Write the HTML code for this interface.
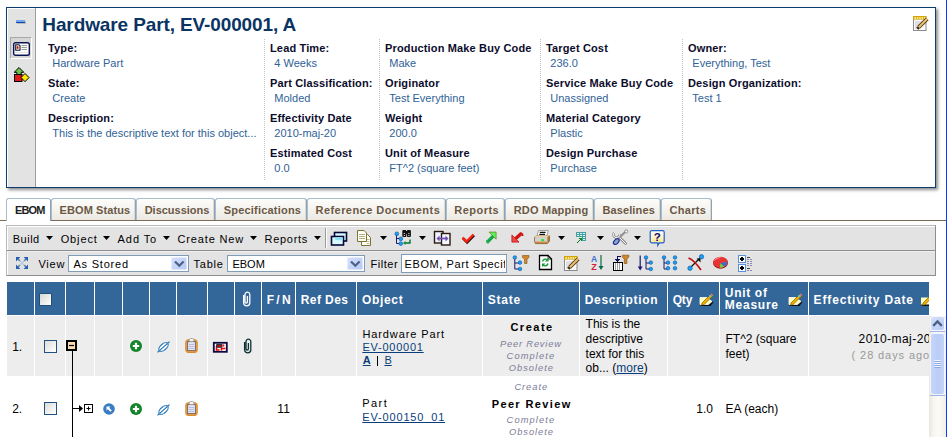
<!DOCTYPE html><html><head><meta charset="utf-8"><style>
html,body{margin:0;padding:0;background:#fff;width:947px;height:437px;overflow:hidden;position:relative;font-family:"Liberation Sans",sans-serif;}
.a{position:absolute;}
.t{position:absolute;white-space:nowrap;}
svg{overflow:visible}
</style></head><body>
<div class="a" style="left:6px;top:7px;width:928px;height:179px;border:1px solid #0d3c6e;background:#fff;box-shadow:2px 2px 3px rgba(0,0,0,.45);"></div>
<div class="a" style="left:7px;top:8px;width:28px;height:179px;background:#e3e3e3;border-right:1px solid #9c9c9c;box-shadow:inset 1px 1px 0 #fff;"></div>
<div class="a" style="left:17px;top:21px;width:9px;height:3px;background:#6d6d6d;opacity:.35;"></div>
<div class="a" style="left:16px;top:20px;width:9px;height:2px;background:#79a6e6;"></div>
<div class="a" style="left:16px;top:22px;width:9px;height:1px;background:#0b4cb4;"></div>
<div class="a" style="left:10px;top:37px;width:22px;height:22px;background:#d6d6d6;border-top:1px solid #a8a8a8;border-left:1px solid #a8a8a8;border-right:1px solid #fff;border-bottom:1px solid #fff;box-sizing:border-box;"></div>
<svg class="a" style="left:13px;top:42px" width="17" height="14" viewBox="0 0 17 14"><rect x="0.7" y="0.7" width="15.6" height="12.6" rx="1.8" fill="#fff" stroke="#0b1450" stroke-width="1.4"/><path d="M2.7 2.7h3.2l1.1 1.1v4.5H2.7z" fill="#fff6c0" stroke="#0b1450" stroke-width="1.1"/><rect x="3.8" y="4.3" width="1.6" height="2.4" fill="#b00000"/><path d="M8.5 3.5h5.5M8.5 5.5h5.5M8.5 7.5h5.5" stroke="#9a9a9a" stroke-width="1"/><path d="M2 10.5h13" stroke="#e4e4e4" stroke-width="1"/></svg>
<svg class="a" style="left:13px;top:66px" width="17" height="17" viewBox="0 0 17 17"><path d="M6 1.5l4.8 4.8h-2.6v3.5h-4.4v-3.5h-2.6z" fill="#6cc24a" stroke="#000" stroke-width="1"/><rect x="1.5" y="8.5" width="7.5" height="7" fill="#e01818" stroke="#000" stroke-width="1"/><path d="M12 7.5l4 4-4 4.2-4-4.2z" fill="#ffe600" stroke="#000" stroke-width="1"/></svg>
<svg class="a" style="left:912px;top:15px" width="17" height="17" viewBox="0 0 17 17"><rect x="1.5" y="2" width="12.5" height="13.5" fill="#fbfbfb" stroke="#8a8a8a" stroke-width="1"/><rect x="1" y="1" width="13.5" height="3.6" fill="#d4a400"/><circle cx="3.2" cy="3" r=".9" fill="#fff3b0"/><circle cx="5.6" cy="3" r=".9" fill="#fff3b0"/><circle cx="8" cy="3" r=".9" fill="#fff3b0"/><circle cx="10.4" cy="3" r=".9" fill="#fff3b0"/><circle cx="12.8" cy="3" r=".9" fill="#fff3b0"/><path d="M3 7h8M3 9h7M3 11h5M3 13h4" stroke="#c4c4cc" stroke-width="1"/><path d="M6.8 12.2L15.2 3.8" stroke="#5a3a08" stroke-width="3.8"/><path d="M6.8 12.2L15.2 3.8" stroke="#e6c27a" stroke-width="2"/><path d="M5.3 13.7l1.5-1.5" stroke="#3a2a10" stroke-width="3"/></svg>
<div class="t " style="left:42.3px;top:15.32px;font-size:19px;line-height:19px;font-weight:bold;color:#0b3463;letter-spacing:-0.115px;" >Hardware Part, EV-000001, A</div>
<div class="t " style="left:48px;top:42.69px;font-size:11px;line-height:11px;font-weight:bold;color:#0c0c2c;letter-spacing:0.15px;" >Type:</div>
<div class="t " style="left:52.3px;top:57.69px;font-size:11px;line-height:11px;color:#2f6296;" >Hardware Part</div>
<div class="t " style="left:48px;top:77.69px;font-size:11px;line-height:11px;font-weight:bold;color:#0c0c2c;letter-spacing:0.15px;" >State:</div>
<div class="t " style="left:52.3px;top:92.69px;font-size:11px;line-height:11px;color:#2f6296;" >Create</div>
<div class="t " style="left:48px;top:112.69px;font-size:11px;line-height:11px;font-weight:bold;color:#0c0c2c;letter-spacing:0.15px;" >Description:</div>
<div class="t " style="left:52.3px;top:127.69px;font-size:11px;line-height:11px;color:#2f6296;" >This is the descriptive text for this object...</div>
<div class="t " style="left:270px;top:42.69px;font-size:11px;line-height:11px;font-weight:bold;color:#0c0c2c;letter-spacing:0.15px;" >Lead Time:</div>
<div class="t " style="left:274.3px;top:57.69px;font-size:11px;line-height:11px;color:#2f6296;" >4 Weeks</div>
<div class="t " style="left:270px;top:77.69px;font-size:11px;line-height:11px;font-weight:bold;color:#0c0c2c;letter-spacing:0.15px;" >Part Classification:</div>
<div class="t " style="left:274.3px;top:92.69px;font-size:11px;line-height:11px;color:#2f6296;" >Molded</div>
<div class="t " style="left:270px;top:112.69px;font-size:11px;line-height:11px;font-weight:bold;color:#0c0c2c;letter-spacing:0.15px;" >Effectivity Date</div>
<div class="t " style="left:274.3px;top:127.69px;font-size:11px;line-height:11px;color:#2f6296;" >2010-maj-20</div>
<div class="t " style="left:270px;top:147.69px;font-size:11px;line-height:11px;font-weight:bold;color:#0c0c2c;letter-spacing:0.15px;" >Estimated Cost</div>
<div class="t " style="left:274.3px;top:162.69px;font-size:11px;line-height:11px;color:#2f6296;" >0.0</div>
<div class="t " style="left:385px;top:42.69px;font-size:11px;line-height:11px;font-weight:bold;color:#0c0c2c;letter-spacing:0.15px;" >Production Make Buy Code</div>
<div class="t " style="left:389.3px;top:57.69px;font-size:11px;line-height:11px;color:#2f6296;" >Make</div>
<div class="t " style="left:385px;top:77.69px;font-size:11px;line-height:11px;font-weight:bold;color:#0c0c2c;letter-spacing:0.15px;" >Originator</div>
<div class="t " style="left:389.3px;top:92.69px;font-size:11px;line-height:11px;color:#2f6296;" >Test Everything</div>
<div class="t " style="left:385px;top:112.69px;font-size:11px;line-height:11px;font-weight:bold;color:#0c0c2c;letter-spacing:0.15px;" >Weight</div>
<div class="t " style="left:389.3px;top:127.69px;font-size:11px;line-height:11px;color:#2f6296;" >200.0</div>
<div class="t " style="left:385px;top:147.69px;font-size:11px;line-height:11px;font-weight:bold;color:#0c0c2c;letter-spacing:0.15px;" >Unit of Measure</div>
<div class="t " style="left:389.3px;top:162.69px;font-size:11px;line-height:11px;color:#2f6296;" >FT^2 (square feet)</div>
<div class="t " style="left:546px;top:42.69px;font-size:11px;line-height:11px;font-weight:bold;color:#0c0c2c;letter-spacing:0.15px;" >Target Cost</div>
<div class="t " style="left:550.3px;top:57.69px;font-size:11px;line-height:11px;color:#2f6296;" >236.0</div>
<div class="t " style="left:546px;top:77.69px;font-size:11px;line-height:11px;font-weight:bold;color:#0c0c2c;letter-spacing:0.15px;" >Service Make Buy Code</div>
<div class="t " style="left:550.3px;top:92.69px;font-size:11px;line-height:11px;color:#2f6296;" >Unassigned</div>
<div class="t " style="left:546px;top:112.69px;font-size:11px;line-height:11px;font-weight:bold;color:#0c0c2c;letter-spacing:0.15px;" >Material Category</div>
<div class="t " style="left:550.3px;top:127.69px;font-size:11px;line-height:11px;color:#2f6296;" >Plastic</div>
<div class="t " style="left:546px;top:147.69px;font-size:11px;line-height:11px;font-weight:bold;color:#0c0c2c;letter-spacing:0.15px;" >Design Purchase</div>
<div class="t " style="left:550.3px;top:162.69px;font-size:11px;line-height:11px;color:#2f6296;" >Purchase</div>
<div class="t " style="left:688px;top:42.69px;font-size:11px;line-height:11px;font-weight:bold;color:#0c0c2c;letter-spacing:0.15px;" >Owner:</div>
<div class="t " style="left:692.3px;top:57.69px;font-size:11px;line-height:11px;color:#2f6296;" >Everything, Test</div>
<div class="t " style="left:688px;top:77.69px;font-size:11px;line-height:11px;font-weight:bold;color:#0c0c2c;letter-spacing:0.15px;" >Design Organization:</div>
<div class="t " style="left:692.3px;top:92.69px;font-size:11px;line-height:11px;color:#2f6296;" >Test 1</div>
<div class="a" style="left:264px;top:39px;width:1px;height:141px;background:repeating-linear-gradient(to bottom,#c4c4c4 0 1px,transparent 1px 2px);"></div>
<div class="a" style="left:379px;top:39px;width:1px;height:141px;background:repeating-linear-gradient(to bottom,#c4c4c4 0 1px,transparent 1px 2px);"></div>
<div class="a" style="left:540px;top:39px;width:1px;height:141px;background:repeating-linear-gradient(to bottom,#c4c4c4 0 1px,transparent 1px 2px);"></div>
<div class="a" style="left:682px;top:39px;width:1px;height:141px;background:repeating-linear-gradient(to bottom,#c4c4c4 0 1px,transparent 1px 2px);"></div>
<div class="a" style="left:0px;top:220px;width:946px;height:1px;background:#7d6b58;"></div>
<div class="a" style="left:6px;top:198px;width:45px;height:23px;background:#fff;border:1px solid #a9bdcd;border-bottom:none;border-right-color:#8aa3b8;border-radius:3px 3px 0 0;box-sizing:border-box;"></div>
<div class="t " style="left:14.9px;top:205.19px;font-size:11px;line-height:11px;font-weight:bold;color:#1e1e1e;letter-spacing:-0.833px;" >EBOM</div>
<div class="a" style="left:51px;top:198px;width:85px;height:22px;background:linear-gradient(#fdfdfb,#ece9e2);border:1px solid #a9bdcd;border-bottom:none;border-right-color:#8aa3b8;border-radius:3px 3px 0 0;box-sizing:border-box;box-shadow:inset -1px 0 0 #dedad0;"></div>
<div class="t " style="left:59.6px;top:205.19px;font-size:11px;line-height:11px;font-weight:bold;color:#6a5845;letter-spacing:0.08px;" >EBOM Status</div>
<div class="a" style="left:136px;top:198px;width:79px;height:22px;background:linear-gradient(#fdfdfb,#ece9e2);border:1px solid #a9bdcd;border-bottom:none;border-right-color:#8aa3b8;border-radius:3px 3px 0 0;box-sizing:border-box;box-shadow:inset -1px 0 0 #dedad0;"></div>
<div class="t " style="left:144.7px;top:205.19px;font-size:11px;line-height:11px;font-weight:bold;color:#6a5845;letter-spacing:-0.02px;" >Discussions</div>
<div class="a" style="left:215px;top:198px;width:92px;height:22px;background:linear-gradient(#fdfdfb,#ece9e2);border:1px solid #a9bdcd;border-bottom:none;border-right-color:#8aa3b8;border-radius:3px 3px 0 0;box-sizing:border-box;box-shadow:inset -1px 0 0 #dedad0;"></div>
<div class="t " style="left:223.7px;top:205.19px;font-size:11px;line-height:11px;font-weight:bold;color:#6a5845;letter-spacing:0.208px;" >Specifications</div>
<div class="a" style="left:307px;top:198px;width:139px;height:22px;background:linear-gradient(#fdfdfb,#ece9e2);border:1px solid #a9bdcd;border-bottom:none;border-right-color:#8aa3b8;border-radius:3px 3px 0 0;box-sizing:border-box;box-shadow:inset -1px 0 0 #dedad0;"></div>
<div class="t " style="left:315.5px;top:205.19px;font-size:11px;line-height:11px;font-weight:bold;color:#6a5845;letter-spacing:0.45px;" >Reference Documents</div>
<div class="a" style="left:446px;top:198px;width:59px;height:22px;background:linear-gradient(#fdfdfb,#ece9e2);border:1px solid #a9bdcd;border-bottom:none;border-right-color:#8aa3b8;border-radius:3px 3px 0 0;box-sizing:border-box;box-shadow:inset -1px 0 0 #dedad0;"></div>
<div class="t " style="left:454.3px;top:205.19px;font-size:11px;line-height:11px;font-weight:bold;color:#6a5845;letter-spacing:0.467px;" >Reports</div>
<div class="a" style="left:505px;top:198px;width:89px;height:22px;background:linear-gradient(#fdfdfb,#ece9e2);border:1px solid #a9bdcd;border-bottom:none;border-right-color:#8aa3b8;border-radius:3px 3px 0 0;box-sizing:border-box;box-shadow:inset -1px 0 0 #dedad0;"></div>
<div class="t " style="left:513.7px;top:205.19px;font-size:11px;line-height:11px;font-weight:bold;color:#6a5845;letter-spacing:0.18px;" >RDO Mapping</div>
<div class="a" style="left:594px;top:198px;width:67px;height:22px;background:linear-gradient(#fdfdfb,#ece9e2);border:1px solid #a9bdcd;border-bottom:none;border-right-color:#8aa3b8;border-radius:3px 3px 0 0;box-sizing:border-box;box-shadow:inset -1px 0 0 #dedad0;"></div>
<div class="t " style="left:602.4px;top:205.19px;font-size:11px;line-height:11px;font-weight:bold;color:#6a5845;letter-spacing:0.125px;" >Baselines</div>
<div class="a" style="left:661px;top:198px;width:51px;height:22px;background:linear-gradient(#fdfdfb,#ece9e2);border:1px solid #a9bdcd;border-bottom:none;border-right-color:#8aa3b8;border-radius:3px 3px 0 0;box-sizing:border-box;box-shadow:inset -1px 0 0 #dedad0;"></div>
<div class="t " style="left:669.4px;top:205.19px;font-size:11px;line-height:11px;font-weight:bold;color:#6a5845;letter-spacing:0.32px;" >Charts</div>
<div class="a" style="left:6px;top:225px;width:930px;height:51px;background:#e3e3e3;border:1px solid #b8b8b8;border-right-color:#8e8e8e;border-bottom-color:#8e8e8e;box-sizing:border-box;box-shadow:inset 1px 1px 0 #fff;"></div>
<div class="a" style="left:7px;top:250px;width:928px;height:1px;background:#8e8e8e;"></div>
<div class="a" style="left:7px;top:251px;width:928px;height:1px;background:#f0f0f0;"></div>
<div class="t " style="left:12.75px;top:233.69px;font-size:11px;line-height:11px;color:#000;letter-spacing:0.5px;" >Build</div>
<div class="t " style="left:60.7px;top:233.69px;font-size:11px;line-height:11px;color:#000;letter-spacing:0.88px;" >Object</div>
<div class="t " style="left:117.6px;top:233.69px;font-size:11px;line-height:11px;color:#000;letter-spacing:0.92px;" >Add To</div>
<div class="t " style="left:177.5px;top:233.69px;font-size:11px;line-height:11px;color:#000;letter-spacing:0.856px;" >Create New</div>
<div class="t " style="left:264.6px;top:233.69px;font-size:11px;line-height:11px;color:#000;letter-spacing:0.7px;" >Reports</div>
<svg class="a" style="left:46px;top:236px" width="8" height="5" viewBox="0 0 8 5"><path d="M0 0h7l-3.5 4z" fill="#000"/></svg>
<svg class="a" style="left:103px;top:236px" width="8" height="5" viewBox="0 0 8 5"><path d="M0 0h7l-3.5 4z" fill="#000"/></svg>
<svg class="a" style="left:163px;top:236px" width="8" height="5" viewBox="0 0 8 5"><path d="M0 0h7l-3.5 4z" fill="#000"/></svg>
<svg class="a" style="left:250px;top:236px" width="8" height="5" viewBox="0 0 8 5"><path d="M0 0h7l-3.5 4z" fill="#000"/></svg>
<svg class="a" style="left:314px;top:236px" width="8" height="5" viewBox="0 0 8 5"><path d="M0 0h7l-3.5 4z" fill="#000"/></svg>
<div class="a" style="left:325px;top:228px;width:1px;height:20px;background:#9a9a9a;"></div>
<div class="a" style="left:326px;top:228px;width:1px;height:20px;background:#fff;"></div>
<svg class="a" style="left:380px;top:236px" width="8" height="5" viewBox="0 0 8 5"><path d="M0 0h7l-3.5 4z" fill="#000"/></svg>
<svg class="a" style="left:419px;top:236px" width="8" height="5" viewBox="0 0 8 5"><path d="M0 0h7l-3.5 4z" fill="#000"/></svg>
<svg class="a" style="left:558px;top:236px" width="8" height="5" viewBox="0 0 8 5"><path d="M0 0h7l-3.5 4z" fill="#000"/></svg>
<svg class="a" style="left:597px;top:236px" width="8" height="5" viewBox="0 0 8 5"><path d="M0 0h7l-3.5 4z" fill="#000"/></svg>
<svg class="a" style="left:634px;top:236px" width="8" height="5" viewBox="0 0 8 5"><path d="M0 0h7l-3.5 4z" fill="#000"/></svg>
<div class="t " style="left:38.4px;top:259.19px;font-size:11px;line-height:11px;color:#000;letter-spacing:0.767px;" >View</div>
<div class="t " style="left:193.4px;top:259.19px;font-size:11px;line-height:11px;color:#000;letter-spacing:0.825px;" >Table</div>
<div class="t " style="left:370.6px;top:259.19px;font-size:11px;line-height:11px;color:#000;letter-spacing:0.52px;" >Filter</div>
<div class="a" style="left:68px;top:255px;width:121px;height:17px;background:#fff;border:1px solid #7f9db9;box-sizing:border-box;"></div>
<div class="a" style="left:171px;top:257px;width:16px;height:13px;background:linear-gradient(135deg,#d6e2fc,#b4c8f4);border-radius:2px;box-shadow:inset 0 0 0 1px rgba(255,255,255,.5);"></div>
<svg class="a" style="left:174px;top:260px" width="11" height="8" viewBox="0 0 11 8"><path d="M1 1.5l4.3 4.3 4.3-4.3" fill="none" stroke="#4d6185" stroke-width="2.2"/></svg>
<div class="t " style="left:73.5px;top:259.29px;font-size:11px;line-height:11px;color:#000;letter-spacing:0.775px;" >As Stored</div>
<div class="a" style="left:227px;top:255px;width:138px;height:17px;background:#fff;border:1px solid #7f9db9;box-sizing:border-box;"></div>
<div class="a" style="left:347px;top:257px;width:16px;height:13px;background:linear-gradient(135deg,#d6e2fc,#b4c8f4);border-radius:2px;box-shadow:inset 0 0 0 1px rgba(255,255,255,.5);"></div>
<svg class="a" style="left:350px;top:260px" width="11" height="8" viewBox="0 0 11 8"><path d="M1 1.5l4.3 4.3 4.3-4.3" fill="none" stroke="#4d6185" stroke-width="2.2"/></svg>
<div class="t " style="left:232.5px;top:259.29px;font-size:11px;line-height:11px;color:#000;letter-spacing:-0.033px;" >EBOM</div>
<div class="a" style="left:401px;top:254px;width:106px;height:19px;background:#fff;border:1px solid #7f9db9;box-sizing:border-box;overflow:hidden;"></div>
<div class="a" style="left:402px;top:255px;width:103px;height:17px;overflow:hidden">
<div class="t" style="left:2.60px;top:4.19px;font-size:11px;line-height:11px;letter-spacing:0.587px">EBOM, Part Specification</div></div>
<svg class="a" style="left:330px;top:231px" width="18" height="15" viewBox="0 0 18 15"><rect x="4.5" y="1.5" width="12" height="8.5" fill="#d8fbff" stroke="#07073a" stroke-width="1.6"/><rect x="1.5" y="5.5" width="12" height="8.5" fill="#d8fbff" stroke="#07073a" stroke-width="1.6"/><rect x="5.3" y="6.3" width="7.4" height="2.9" fill="#8ee4f6"/></svg>
<svg class="a" style="left:356px;top:229px" width="16" height="17" viewBox="0 0 16 17"><path d="M5.5 5.5H11.5L14.5 8.5V16.5H5.5Z" fill="#fffff4" stroke="#7a7236" stroke-width="1"/><path d="M10.5 10.5h3M10.5 12.5h3M10.5 14.5h3" stroke="#c4be94" stroke-width="1"/><path d="M1.5 1.5H8L10.5 4V12.5H1.5Z" fill="#fffff4" stroke="#7a7236" stroke-width="1"/><path d="M3 5.5h6M3 7.5h6M3 9.5h6" stroke="#b4ae80" stroke-width="1"/></svg>
<svg class="a" style="left:394px;top:229px" width="19" height="17" viewBox="0 0 19 17"><path d="M2.5 5v9.5h4M2.5 9.5h4" fill="none" stroke="#1a1a70" stroke-width="1"/><circle cx="2.8" cy="4.8" r="1.9" fill="#1ea0f0" stroke="#0a50a0" stroke-width=".6"/><circle cx="6.8" cy="9.8" r="1.9" fill="#1ea0f0" stroke="#0a50a0" stroke-width=".6"/><circle cx="6.8" cy="14.6" r="1.9" fill="#1ea0f0" stroke="#0a50a0" stroke-width=".6"/><rect x="8.3" y="1" width="4" height="7" rx="1" fill="#111"/><rect x="12.9" y="1" width="4" height="7" rx="1" fill="#111"/><rect x="11.5" y="2" width="2.2" height="3" fill="#111"/><path d="M9.8 4.5h1M14.4 4.5h1M9.8 6.5h1M14.4 6.5h1" stroke="#fff" stroke-width="1"/><path d="M16 10.5v3.5h-5" fill="none" stroke="#0a7030" stroke-width="1.4"/><path d="M11.5 12l-2.5 2 2.5 2z" fill="#0a9030"/></svg>
<svg class="a" style="left:433px;top:230px" width="18" height="16" viewBox="0 0 18 16"><rect x="1.5" y="1.5" width="8.5" height="11.5" fill="#eef4ff" stroke="#2a1a10" stroke-width="1.4"/><rect x="8.5" y="3.5" width="8.5" height="11.5" fill="#f6f9ff" stroke="#2a1a10" stroke-width="1.4"/><path d="M5 8.5h9" stroke="#7050b0" stroke-width="1.8"/><path d="M3.5 8.5l3-3v6zM15.5 8.5l-3-3v6z" fill="#7050b0"/></svg>
<svg class="a" style="left:461px;top:233px" width="14" height="11" viewBox="0 0 14 11"><path d="M1.5 4.5l4 4 7-7" fill="none" stroke="#301010" stroke-width="2.6" transform="translate(.6,.8)"/><path d="M1.5 4.5l4 4 7-7" fill="none" stroke="#ff2010" stroke-width="2.4"/></svg>
<svg class="a" style="left:485px;top:231px" width="13" height="13" viewBox="0 0 13 13"><path d="M2.8 10.6L8.5 4.9" stroke="#12a844" stroke-width="3.4"/><path d="M1.8 9.5c-.3 1.5.5 2.3 2 2.3" fill="none" stroke="#12a844" stroke-width="1.6"/><path d="M4 1.1H11.1V8.2z" fill="#5cf45c" stroke="#6a8a20" stroke-width=".8"/></svg>
<svg class="a" style="left:510px;top:232px" width="14" height="12" viewBox="0 0 14 12"><path d="M5.5 6.8L11 1.8" stroke="#d01414" stroke-width="3.4"/><path d="M10 1.2c1.8-.3 2.8.8 2.6 2.8" fill="none" stroke="#d01414" stroke-width="1.8"/><path d="M1.9 3V10.1H9z" fill="#f04848" stroke="#c01010" stroke-width=".8"/></svg>
<svg class="a" style="left:533px;top:229px" width="18" height="16" viewBox="0 0 18 16"><path d="M4 7L5.5 1.5H15.2L13.8 7z" fill="#fff" stroke="#8a8a8a" stroke-width=".8"/><path d="M6.8 3.4H12.6M6.3 5.4H12" stroke="#111" stroke-width="1.1"/><path d="M1.5 8.3L3.5 6.8H16.5L14.3 8.3z" fill="#fff6c8" stroke="#b08050" stroke-width=".6"/><rect x="1.5" y="8.3" width="12.8" height="4.2" fill="#d4d4d4"/><path d="M1.5 12.5H14.3V14.6H2.5z" fill="#c88a48"/><path d="M14.3 8.3L16.5 6.8V12L14.3 14.6z" fill="#b47a3a"/><path d="M1.5 8.3V12.5L2.5 14.6H14.3L16.5 12V6.8" fill="none" stroke="#8a5a20" stroke-width=".8"/><rect x="8.2" y="10.2" width="3" height="1.7" fill="#10e818"/></svg>
<svg class="a" style="left:575px;top:231px" width="13" height="14" viewBox="0 0 13 14"><g shape-rendering="crispEdges"><path d="M1 1h10v9H1z" fill="#4e9c9c"/><path d="M4 1h1v9H4zM7 1h1v9H7z" fill="#22aab0"/><path d="M2 2h2v1H2zM5 2h2v1H5zM8 2h2v1H8zM2 4h2v1H2zM5 4h2v1H5zM8 4h2v1H8zM8 6h2v1H8zM8 8h2v1H8z" fill="#e8f0f0"/><path d="M1 6h6v7H1z" fill="#e3e3e3"/><path d="M3 7h4v4z" fill="#108a20"/><path d="M1.5 12.5l3-3" stroke="#0a6a1a" stroke-width="1.3"/></g></svg>
<svg class="a" style="left:611px;top:229px" width="18" height="17" viewBox="0 0 18 17"><path d="M8.3 8.3L14.6 14.6" stroke="#8c8c8c" stroke-width="2.8" stroke-linecap="round"/><path d="M8.3 8.3L14.6 14.6" stroke="#fff" stroke-width="1" stroke-linecap="round"/><path d="M3.2 3.8a3 3 0 1 0 5.2 1.3" fill="none" stroke="#8c8c8c" stroke-width="2.6"/><path d="M3.2 3.8a3 3 0 1 0 5.2 1.3" fill="none" stroke="#fff" stroke-width="1"/><path d="M9.5 7.6L15.2 1.9" stroke="#8c8c8c" stroke-width="2"/><circle cx="15.3" cy="2.4" r="1.5" fill="#fff" stroke="#8c8c8c" stroke-width="1"/><ellipse cx="5.3" cy="12.6" rx="3.4" ry="2.1" transform="rotate(-45 5.3 12.6)" fill="#8aa6c8" stroke="#1a2c9a" stroke-width="1.1"/></svg>
<svg class="a" style="left:649px;top:229px" width="17" height="18" viewBox="0 0 17 18"><defs><linearGradient id="hg" x1="0" y1="0" x2="0" y2="1"><stop offset="0" stop-color="#ffffff"/><stop offset="1" stop-color="#ffe27a"/></linearGradient></defs><path d="M2.8 1.6h10.8a1.6 1.6 0 0 1 1.6 1.6v9a1.6 1.6 0 0 1-1.6 1.6h-3.2l-1.6 2.6v-2.6h-6a1.6 1.6 0 0 1-1.6-1.6v-9a1.6 1.6 0 0 1 1.6-1.6z" fill="url(#hg)" stroke="#2060c8" stroke-width="1.2"/><text x="8.2" y="11.8" font-family="Liberation Sans" font-weight="bold" font-size="11.5" text-anchor="middle" fill="#0a0a6a">?</text></svg>
<svg class="a" style="left:15px;top:256px" width="14" height="14" viewBox="0 0 14 14"><path d="M3 3l8 8M11 3l-8 8" stroke="#b4cce6" stroke-width="1.5"/><path d="M3.2 3.2l1.6 1.6M10.8 3.2l-1.6 1.6M3.2 10.8l1.6-1.6M10.8 10.8l-1.6-1.6" stroke="#6a7a8a" stroke-width="1.5"/><path d="M1 1h4.4L1 5.4zM13 1v4.4L8.6 1zM1 13V8.6L5.4 13zM13 13H8.6L13 8.6z" fill="#1f5fb8"/></svg>
<svg class="a" style="left:512px;top:254px" width="18" height="17" viewBox="0 0 18 17"><path d="M2.8 4v11h5M2.8 9h5" fill="none" stroke="#1a1a70" stroke-width="1"/><circle cx="2.8" cy="3.5" r="1.8" fill="#1ea0f0" stroke="#0a50a0" stroke-width=".6"/><circle cx="8" cy="8.6" r="1.8" fill="#1ea0f0" stroke="#0a50a0" stroke-width=".6"/><circle cx="8" cy="15" r="1.8" fill="#1ea0f0" stroke="#0a50a0" stroke-width=".6"/><path d="M10.5 1.5h6.5v2l-2 1.5v4.5h-2.5v-4.5l-2-1.5z" fill="#d08830" stroke="#8a5010" stroke-width=".6"/></svg>
<svg class="a" style="left:538px;top:254px" width="15" height="17" viewBox="0 0 15 17"><path d="M1.5 1.5h8.5l3.5 3.5v10.5h-12z" fill="#fff" stroke="#000" stroke-width="1.3"/><path d="M10 1.5v3.5h3.5" fill="none" stroke="#000" stroke-width=".8"/><path d="M4.5 7.5a3 3 0 0 1 5-1.5M10 9.5a3 3 0 0 1-5 1.5" fill="none" stroke="#10a030" stroke-width="1.4"/><path d="M10.5 4v3.5h-3.5zM4 13v-3.5h3.5z" fill="#10a030"/></svg>
<svg class="a" style="left:563px;top:255px" width="17" height="17" viewBox="0 0 17 17"><rect x="1.5" y="2" width="12.5" height="13.5" fill="#fbfbfb" stroke="#8a8a8a" stroke-width="1"/><rect x="1" y="1" width="13.5" height="3.6" fill="#d4a400"/><circle cx="3.2" cy="3" r=".9" fill="#fff3b0"/><circle cx="5.6" cy="3" r=".9" fill="#fff3b0"/><circle cx="8" cy="3" r=".9" fill="#fff3b0"/><circle cx="10.4" cy="3" r=".9" fill="#fff3b0"/><circle cx="12.8" cy="3" r=".9" fill="#fff3b0"/><path d="M3 7h8M3 9h7M3 11h5M3 13h4" stroke="#c4c4cc" stroke-width="1"/><path d="M6.8 12.2L15.2 3.8" stroke="#5a3a08" stroke-width="3.8"/><path d="M6.8 12.2L15.2 3.8" stroke="#e6c27a" stroke-width="2"/><path d="M5.3 13.7l1.5-1.5" stroke="#3a2a10" stroke-width="3"/></svg>
<svg class="a" style="left:590px;top:254px" width="15" height="17" viewBox="0 0 15 17"><text x="4" y="7.5" font-family="Liberation Sans" font-weight="bold" font-size="8.5" text-anchor="middle" fill="#3a70d0">A</text><text x="4" y="16" font-family="Liberation Sans" font-weight="bold" font-size="9" text-anchor="middle" fill="#d02040">Z</text><path d="M11 1v12" stroke="#0a6a4a" stroke-width="1.2"/><path d="M8.5 12h5l-2.5 4z" fill="#0a6a4a"/></svg>
<svg class="a" style="left:612px;top:254px" width="18" height="17" viewBox="0 0 18 17"><g shape-rendering="crispEdges"><path d="M1 8h10v9H1z" fill="#000"/><path d="M2 9h8v7H2z" fill="#fff"/><path d="M3 9h1v7H3zM5 9h1v7H5zM7 9h1v7H7z" fill="#a0a0a0"/><path d="M5 2h4v1H6v3H5z" fill="#10105a"/><path d="M3 5h5v1H3zM4 6h3v1H4zM5 7h1v1H5z" fill="#10105a"/></g><path d="M10.3 1.2h6.6v1.8l-2 2v4.5h-2.6V5l-2-2z" fill="#d08828" stroke="#7a4a10" stroke-width=".6"/></svg>
<svg class="a" style="left:637px;top:254px" width="17" height="17" viewBox="0 0 17 17"><path d="M3.2 1.5v13" stroke="#1a1a70" stroke-width="1.2"/><path d="M0.8 12.5h4.8l-2.4 4z" fill="#1a1a70"/><path d="M9 4v11h5M9 9h5" fill="none" stroke="#1a1a70" stroke-width="1"/><circle cx="9" cy="3.5" r="1.8" fill="#1ea0f0" stroke="#0a50a0" stroke-width=".6"/><circle cx="13.8" cy="8.6" r="1.8" fill="#1ea0f0" stroke="#0a50a0" stroke-width=".6"/><circle cx="13.8" cy="15" r="1.8" fill="#1ea0f0" stroke="#0a50a0" stroke-width=".6"/></svg>
<svg class="a" style="left:661px;top:254px" width="17" height="17" viewBox="0 0 17 17"><path d="M3 4v11h4M3 9h4" fill="none" stroke="#1a1a70" stroke-width="1"/><circle cx="3" cy="3.5" r="1.8" fill="#1ea0f0" stroke="#0a50a0" stroke-width=".6"/><circle cx="7" cy="8.6" r="1.8" fill="#1ea0f0" stroke="#0a50a0" stroke-width=".6"/><circle cx="7" cy="14.2" r="1.8" fill="#1ea0f0" stroke="#0a50a0" stroke-width=".6"/><circle cx="14" cy="3.5" r="1.8" fill="#1ea0f0" stroke="#0a50a0" stroke-width=".6"/><circle cx="14" cy="8.6" r="1.8" fill="#1ea0f0" stroke="#0a50a0" stroke-width=".6"/><circle cx="14" cy="14.2" r="1.8" fill="#1ea0f0" stroke="#0a50a0" stroke-width=".6"/></svg>
<svg class="a" style="left:686px;top:254px" width="19" height="17" viewBox="0 0 19 17"><path d="M4 14l10-10" stroke="#111" stroke-width="1.2"/><path d="M10.5 4.5h4v4z" fill="#111"/><circle cx="4" cy="14.2" r="2.2" fill="#1ea0f0" stroke="#0a50a0" stroke-width=".6"/><circle cx="15.5" cy="2.8" r="2.2" fill="#1ea0f0" stroke="#0a50a0" stroke-width=".6"/><path d="M2.5 4c4 1.5 8 5.5 12.5 12" fill="none" stroke="#c01010" stroke-width="1.6"/></svg>
<svg class="a" style="left:712px;top:255px" width="17" height="15" viewBox="0 0 17 15"><ellipse cx="8.5" cy="8" rx="7.5" ry="5.8" fill="#a01818"/><ellipse cx="8.5" cy="7.2" rx="7.3" ry="5.5" fill="#e83434"/><path d="M8.3 8.2l6.8-1.8c.3 2-.8 4-2.8 5z" fill="#3a70c8"/><path d="M8.3 8.2l4 3.2c-1.2.9-2.8 1.3-4.5 1.3z" fill="#70d040"/><path d="M2.5 5.5c1.2-1.8 3.5-2.8 6-2.8" stroke="#ff9a9a" stroke-width="1" fill="none"/></svg>
<svg class="a" style="left:737px;top:254px" width="18" height="18" viewBox="0 0 18 18"><g shape-rendering="crispEdges"><rect x="1.5" y="1.5" width="7" height="7" fill="#fff" stroke="#5a90d8" stroke-width="1.2"/><rect x="1.5" y="10.5" width="7" height="7" fill="#fff" stroke="#5a90d8" stroke-width="1.2"/><path d="M3 4h4v2H3zM4 3h2v4H4zM3 13h4v2H3zM4 12h2v4H4z" fill="#000"/><path d="M10 3h3v1h-3zM10 14h3v1h-3z" fill="#404040"/><path d="M10 5h2v1h-2zM13 5h2v1h-2zM10 7h2v1h-2zM13 7h2v1h-2zM10 9h2v1h-2zM13 9h2v1h-2zM10 11h2v1h-2zM13 11h2v1h-2zM10 16h2v1h-2zM13 16h2v1h-2z" fill="#8c8cb4"/></g></svg>
<div class="a" style="left:7px;top:282px;width:922px;height:33px;background:#336699;"></div>
<div class="a" style="left:34px;top:282px;width:1px;height:33px;background:#fff;"></div>
<div class="a" style="left:65px;top:282px;width:1px;height:33px;background:#fff;"></div>
<div class="a" style="left:94px;top:282px;width:1px;height:33px;background:#fff;"></div>
<div class="a" style="left:122px;top:282px;width:1px;height:33px;background:#fff;"></div>
<div class="a" style="left:149px;top:282px;width:1px;height:33px;background:#fff;"></div>
<div class="a" style="left:176px;top:282px;width:1px;height:33px;background:#fff;"></div>
<div class="a" style="left:207px;top:282px;width:1px;height:33px;background:#fff;"></div>
<div class="a" style="left:234px;top:282px;width:1px;height:33px;background:#fff;"></div>
<div class="a" style="left:261px;top:282px;width:1px;height:33px;background:#fff;"></div>
<div class="a" style="left:295px;top:282px;width:1px;height:33px;background:#fff;"></div>
<div class="a" style="left:356px;top:282px;width:1px;height:33px;background:#fff;"></div>
<div class="a" style="left:482px;top:282px;width:1px;height:33px;background:#fff;"></div>
<div class="a" style="left:579px;top:282px;width:1px;height:33px;background:#fff;"></div>
<div class="a" style="left:667px;top:282px;width:1px;height:33px;background:#fff;"></div>
<div class="a" style="left:719px;top:282px;width:1px;height:33px;background:#fff;"></div>
<div class="a" style="left:808px;top:282px;width:1px;height:33px;background:#fff;"></div>
<div class="t " style="left:266.7px;top:294.24px;font-size:12px;line-height:12px;font-weight:bold;color:#fff;letter-spacing:2.35px;" >F/N</div>
<div class="t " style="left:300.7px;top:294.24px;font-size:12px;line-height:12px;font-weight:bold;color:#fff;letter-spacing:0.433px;" >Ref Des</div>
<div class="t " style="left:361.9px;top:294.24px;font-size:12px;line-height:12px;font-weight:bold;color:#fff;letter-spacing:0.7px;" >Object</div>
<div class="t " style="left:487.7px;top:294.24px;font-size:12px;line-height:12px;font-weight:bold;color:#fff;letter-spacing:0.775px;" >State</div>
<div class="t " style="left:584.7px;top:294.24px;font-size:12px;line-height:12px;font-weight:bold;color:#fff;letter-spacing:0.68px;" >Description</div>
<div class="t " style="left:672.7px;top:294.24px;font-size:12px;line-height:12px;font-weight:bold;color:#fff;letter-spacing:-0.15px;" >Qty</div>
<div class="t " style="left:724.8px;top:286.64px;font-size:12px;line-height:12px;font-weight:bold;color:#fff;letter-spacing:0.683px;" >Unit of</div>
<div class="t " style="left:724.8px;top:299.44px;font-size:12px;line-height:12px;font-weight:bold;color:#fff;letter-spacing:0.75px;" >Measure</div>
<div class="a" style="left:809px;top:282px;width:120px;height:33px;overflow:hidden">
<div class="t " style="left:4.6px;top:12.24px;font-size:12px;line-height:12px;font-weight:bold;color:#fff;letter-spacing:0.847px;" >Effectivity Date</div>
</div>
<div class="a" style="left:39px;top:293px;width:13px;height:13px;background:linear-gradient(135deg,#d8d8d0,#fff);border:1px solid #1f4f7f;box-sizing:border-box;border-radius:1px;"></div>
<div class="a" style="left:7px;top:316px;width:922px;height:60px;background:#ededed;"></div>
<div class="a" style="left:34px;top:316px;width:1px;height:60px;background:#fff;"></div>
<div class="a" style="left:65px;top:316px;width:1px;height:60px;background:#fff;"></div>
<div class="a" style="left:94px;top:316px;width:1px;height:60px;background:#fff;"></div>
<div class="a" style="left:122px;top:316px;width:1px;height:60px;background:#fff;"></div>
<div class="a" style="left:149px;top:316px;width:1px;height:60px;background:#fff;"></div>
<div class="a" style="left:176px;top:316px;width:1px;height:60px;background:#fff;"></div>
<div class="a" style="left:207px;top:316px;width:1px;height:60px;background:#fff;"></div>
<div class="a" style="left:234px;top:316px;width:1px;height:60px;background:#fff;"></div>
<div class="a" style="left:261px;top:316px;width:1px;height:60px;background:#fff;"></div>
<div class="a" style="left:295px;top:316px;width:1px;height:60px;background:#fff;"></div>
<div class="a" style="left:356px;top:316px;width:1px;height:60px;background:#fff;"></div>
<div class="a" style="left:482px;top:316px;width:1px;height:60px;background:#fff;"></div>
<div class="a" style="left:579px;top:316px;width:1px;height:60px;background:#fff;"></div>
<div class="a" style="left:667px;top:316px;width:1px;height:60px;background:#fff;"></div>
<div class="a" style="left:719px;top:316px;width:1px;height:60px;background:#fff;"></div>
<div class="a" style="left:808px;top:316px;width:1px;height:60px;background:#fff;"></div>
<div class="t " style="left:12.2px;top:341.14px;font-size:12px;line-height:12px;color:#000;" >1.</div>
<div class="t " style="left:12.2px;top:402.84px;font-size:12px;line-height:12px;color:#000;" >2.</div>
<div class="a" style="left:44px;top:340px;width:13px;height:13px;background:linear-gradient(135deg,#dcdcd6,#fff);border:1px solid #1f5285;box-sizing:border-box;"></div>
<div class="a" style="left:44px;top:402px;width:13px;height:13px;background:linear-gradient(135deg,#dcdcd6,#fff);border:1px solid #1f5285;box-sizing:border-box;"></div>
<div class="a" style="left:72px;top:351px;width:1px;height:86px;background:#000;"></div>
<svg class="a" style="left:66px;top:340px" width="11" height="11" viewBox="0 0 11 11"><rect x="1" y="1" width="9" height="9" fill="#f9d9b0" stroke="#000" stroke-width="2"/><path d="M3 5.5h5" stroke="#000" stroke-width="1.2"/></svg>
<div class="a" style="left:72px;top:408px;width:8px;height:1px;background:#000;"></div>
<svg class="a" style="left:79px;top:405px" width="4" height="7" viewBox="0 0 4 7"><path d="M0 0l4 3.5-4 3.5z" fill="#000"/></svg>
<svg class="a" style="left:84px;top:404px" width="9" height="9" viewBox="0 0 9 9"><rect x="0.5" y="0.5" width="8" height="8" fill="#fff" stroke="#000" stroke-width="1"/><path d="M2.5 4.5h4M4.5 2.5v4" stroke="#000" stroke-width="1"/></svg>
<svg class="a" style="left:103px;top:403px" width="12" height="12" viewBox="0 0 12 12"><circle cx="6" cy="6" r="5.8" fill="#3a7cc0"/><path d="M3.5 3.5h4l-1.3 1.3 2.6 2.6-1.4 1.4-2.6-2.6-1.3 1.3z" fill="#fff"/></svg>
<svg class="a" style="left:130px;top:340px" width="12" height="12" viewBox="0 0 12 12"><circle cx="6" cy="6" r="6" fill="#14842a"/><path d="M6 2.8v6.4M2.8 6h6.4" stroke="#fff" stroke-width="2.2"/></svg>
<svg class="a" style="left:156px;top:340px" width="15" height="14" viewBox="0 0 15 14"><g transform="rotate(-42 7.5 7)"><ellipse cx="7.5" cy="7" rx="5.6" ry="3" fill="#fff" stroke="#1f70b4" stroke-width="1.2"/><path d="M-0.6 7h16.2" stroke="#1f70b4" stroke-width="1.2"/><ellipse cx="7.5" cy="7" rx="5.6" ry="3" fill="none" stroke="#a8d4ff" stroke-width=".5" stroke-dasharray="1 1.2"/></g></svg>
<svg class="a" style="left:185px;top:338px" width="13" height="15" viewBox="0 0 13 15"><rect x="0.8" y="1.8" width="11.4" height="12.6" rx="2.2" fill="#f4a43a" stroke="#d88420" stroke-width="1"/><rect x="2.6" y="3.6" width="7.8" height="9" fill="#e6e6f6" stroke="#6a6a7a" stroke-width="1"/><path d="M4 6.5h5M4 8.5h5M4 10.5h5" stroke="#b8b8dc" stroke-width="1"/><rect x="4.3" y="0.5" width="4.4" height="3" rx="1" fill="#f4f4f4" stroke="#9a9a9a" stroke-width=".8"/></svg>
<svg class="a" style="left:130px;top:403px" width="12" height="12" viewBox="0 0 12 12"><circle cx="6" cy="6" r="6" fill="#14842a"/><path d="M6 2.8v6.4M2.8 6h6.4" stroke="#fff" stroke-width="2.2"/></svg>
<svg class="a" style="left:156px;top:403px" width="15" height="14" viewBox="0 0 15 14"><g transform="rotate(-42 7.5 7)"><ellipse cx="7.5" cy="7" rx="5.6" ry="3" fill="#fff" stroke="#1f70b4" stroke-width="1.2"/><path d="M-0.6 7h16.2" stroke="#1f70b4" stroke-width="1.2"/><ellipse cx="7.5" cy="7" rx="5.6" ry="3" fill="none" stroke="#a8d4ff" stroke-width=".5" stroke-dasharray="1 1.2"/></g></svg>
<svg class="a" style="left:185px;top:401px" width="13" height="15" viewBox="0 0 13 15"><rect x="0.8" y="1.8" width="11.4" height="12.6" rx="2.2" fill="#f4a43a" stroke="#d88420" stroke-width="1"/><rect x="2.6" y="3.6" width="7.8" height="9" fill="#e6e6f6" stroke="#6a6a7a" stroke-width="1"/><path d="M4 6.5h5M4 8.5h5M4 10.5h5" stroke="#b8b8dc" stroke-width="1"/><rect x="4.3" y="0.5" width="4.4" height="3" rx="1" fill="#f4f4f4" stroke="#9a9a9a" stroke-width=".8"/></svg>
<svg class="a" style="left:212px;top:341px" width="16" height="12" viewBox="0 0 16 12"><rect x="1.8" y="1.8" width="13" height="9" fill="#fff" stroke="#0a0a40" stroke-width="1.8"/><path d="M4.5 5v4h3M9.5 9.5v-2h4M11.5 3.5v2" fill="none" stroke="#f00000" stroke-width="1.6"/><rect x="4.7" y="3.6" width="5.2" height="2.6" fill="#e00000" stroke="#0a3040" stroke-width="1"/></svg>
<svg class="a" style="left:243px;top:338px" width="10" height="16" viewBox="0 0 10 16"><path d="M1.6 4v7.8a3.1 3.1 0 0 0 6.2 0V3.6a2.4 2.4 0 0 0-4.8 0V10.8a1.2 1.2 0 0 0 2.4 0V5" fill="none" stroke="#0a3434" stroke-width="1.3"/></svg>
<svg class="a" style="left:242px;top:291px" width="10" height="16" viewBox="0 0 10 16"><path d="M1.6 4v7.8a3.1 3.1 0 0 0 6.2 0V3.6a2.4 2.4 0 0 0-4.8 0V10.8a1.2 1.2 0 0 0 2.4 0V5" fill="none" stroke="#fff" stroke-width="1.3"/></svg>
<div class="t " style="left:362.4px;top:329.49px;font-size:11px;line-height:11px;color:#000;letter-spacing:0.892px;" >Hardware Part</div>
<div class="t " style="left:362.4px;top:342.49px;font-size:11px;line-height:11px;color:#0b3d7c;letter-spacing:0.763px;text-decoration:underline;" >EV-000001</div>
<div class="t " style="left:362.7px;top:355.19px;font-size:11px;line-height:11px;font-weight:bold;color:#0b3d7c;text-decoration:underline;" >A</div>
<div class="a" style="left:377px;top:356px;width:1px;height:10px;background:#000;"></div>
<div class="t " style="left:384.4px;top:355.19px;font-size:11px;line-height:11px;color:#0b3d7c;text-decoration:underline;" >B</div>
<div class="t " style="left:362.3px;top:398.29px;font-size:11px;line-height:11px;color:#000;letter-spacing:1.433px;" >Part</div>
<div class="t " style="left:362.3px;top:411.69px;font-size:11px;line-height:11px;color:#0b3d7c;letter-spacing:0.836px;text-decoration:underline;" >EV-000150_01</div>
<div class="t " style="left:510.4px;top:322.39px;font-size:11px;line-height:11px;font-weight:bold;color:#000;letter-spacing:1.52px;" >Create</div>
<div class="t " style="left:500.1px;top:339.63px;font-size:9.3px;line-height:9.3px;color:#7c7c98;letter-spacing:0.81px;font-style:italic;" >Peer Review</div>
<div class="t " style="left:506.6px;top:351.73px;font-size:9.3px;line-height:9.3px;color:#7c7c98;letter-spacing:1.114px;font-style:italic;" >Complete</div>
<div class="t " style="left:508.8px;top:363.53px;font-size:9.3px;line-height:9.3px;color:#7c7c98;letter-spacing:0.986px;font-style:italic;" >Obsolete</div>
<div class="t " style="left:514.4px;top:383.03px;font-size:9.3px;line-height:9.3px;color:#7c7c98;letter-spacing:0.96px;font-style:italic;" >Create</div>
<div class="t " style="left:491.7px;top:398.69px;font-size:11px;line-height:11px;font-weight:bold;color:#000;letter-spacing:1.37px;" >Peer Review</div>
<div class="t " style="left:506.6px;top:416.03px;font-size:9.3px;line-height:9.3px;color:#7c7c98;letter-spacing:1.1px;font-style:italic;" >Complete</div>
<div class="t " style="left:509.0px;top:427.53px;font-size:9.3px;line-height:9.3px;color:#7c7c98;letter-spacing:0.957px;font-style:italic;" >Obsolete</div>
<div class="t " style="left:585.6px;top:317.54px;font-size:12px;line-height:12px;color:#000;" >This is the</div>
<div class="t " style="left:585.6px;top:332.54px;font-size:12px;line-height:12px;color:#000;" >descriptive</div>
<div class="t " style="left:585.6px;top:347.54px;font-size:12px;line-height:12px;color:#000;" >text for this</div>
<div class="t " style="left:585.6px;top:362.14px;font-size:12px;line-height:12px;color:#000;" >ob... (<span style="color:#0b3d7c;text-decoration:underline">more</span>)</div>
<div class="t " style="left:725.5px;top:332.74px;font-size:12px;line-height:12px;color:#000;" >FT^2 (square</div>
<div class="t " style="left:725.5px;top:347.84px;font-size:12px;line-height:12px;color:#000;" >feet)</div>
<div class="t " style="left:725.5px;top:403.34px;font-size:12px;line-height:12px;color:#000;" >EA (each)</div>
<div class="t" style="left:600px;width:113px;text-align:right;top:403.34px;font-size:12px;line-height:12px">1.0</div>
<div class="t " style="left:277.2px;top:402.94px;font-size:12px;line-height:12px;color:#000;letter-spacing:0.3px;" >11</div>
<div class="a" style="left:809px;top:316px;width:120px;height:60px;overflow:hidden">
<div class="t " style="left:49.6px;top:16.74px;font-size:12px;line-height:12px;color:#000;letter-spacing:0.45px;" >2010-maj-20</div>
<div class="t " style="left:42.6px;top:33.79px;font-size:11px;line-height:11px;color:#999;letter-spacing:0.9px;" >( 28 days ago )</div>
</div>
<svg class="a" style="left:699px;top:292px" width="15" height="14" viewBox="0 0 15 14"><path d="M0.5 13l2 1h9l3-4-2.5-0.5z" fill="#000" opacity=".85"/><path d="M1 5.5h7l5 4-3.5 3h-8.5z" fill="#ffffc0" stroke="#fffff0" stroke-width=".8"/><path d="M3 11l8.5-8.5 1.8 1.8-8.5 8.5-2.3.5z" fill="#f0b000" stroke="#704000" stroke-width=".6"/><path d="M11.5 2.5l1.8 1.8 1-1-1.8-1.8z" fill="#e88080"/><circle cx="11" cy="4" r=".9" fill="#20e0f0"/></svg>
<svg class="a" style="left:788px;top:292px" width="15" height="14" viewBox="0 0 15 14"><path d="M0.5 13l2 1h9l3-4-2.5-0.5z" fill="#000" opacity=".85"/><path d="M1 5.5h7l5 4-3.5 3h-8.5z" fill="#ffffc0" stroke="#fffff0" stroke-width=".8"/><path d="M3 11l8.5-8.5 1.8 1.8-8.5 8.5-2.3.5z" fill="#f0b000" stroke="#704000" stroke-width=".6"/><path d="M11.5 2.5l1.8 1.8 1-1-1.8-1.8z" fill="#e88080"/><circle cx="11" cy="4" r=".9" fill="#20e0f0"/></svg>
<div class="a" style="left:909px;top:282px;width:20px;height:33px;overflow:hidden">
<svg class="a" style="left:11px;top:10px" width="15" height="14"><path d="M0.5 13l2 1h9l3-4-2.5-0.5z" fill="#000" opacity=".85"/><path d="M1 5.5h7l5 4-3.5 3h-8.5z" fill="#ffffc0"/><path d="M3 11l8.5-8.5 1.8 1.8-8.5 8.5-2.3.5z" fill="#f0b000" stroke="#704000" stroke-width=".6"/></svg>
</div>
<div class="a" style="left:929px;top:316px;width:17px;height:121px;background:linear-gradient(to right,#e9e7de,#f6f5ef 25%,#fbfbf8 55%,#f1efe7);"></div>
<div class="a" style="left:930px;top:331px;width:15px;height:1px;background:#9fb4e2;"></div>
<div class="a" style="left:930px;top:316px;width:15px;height:15px;background:linear-gradient(135deg,#d4e0fc,#b9ccf6);border:1px solid #f4f7ff;border-radius:3px;box-sizing:border-box;"></div>
<div class="a" style="left:930px;top:395px;width:15px;height:1px;background:#9fb4e2;"></div>
<div class="a" style="left:930px;top:333px;width:15px;height:62px;background:linear-gradient(to right,#c6d6fb,#b9cdf7 60%,#c4d4fa);border:1px solid #f0f4ff;border-radius:3px;box-sizing:border-box;"></div>
<svg class="a" style="left:930px;top:316px" width="15" height="15" viewBox="0 0 15 15"><path d="M3.2 9.8l4.3-4.3 4.3 4.3" fill="none" stroke="#4d6185" stroke-width="2.4"/></svg>
<svg class="a" style="left:930px;top:333px" width="15" height="62" viewBox="0 0 15 62"><path d="M4.5 27.5h6M4.5 29.5h6M4.5 31.5h6M4.5 33.5h6" stroke="#f4f7ff" stroke-width="1"/><path d="M4.5 28.5h6M4.5 30.5h6M4.5 32.5h6M4.5 34.5h6" stroke="#8ca8e0" stroke-width="1"/></svg>
<div class="a" style="left:946px;top:0px;width:1px;height:437px;background:#0a3bff;"></div>
</body></html>
